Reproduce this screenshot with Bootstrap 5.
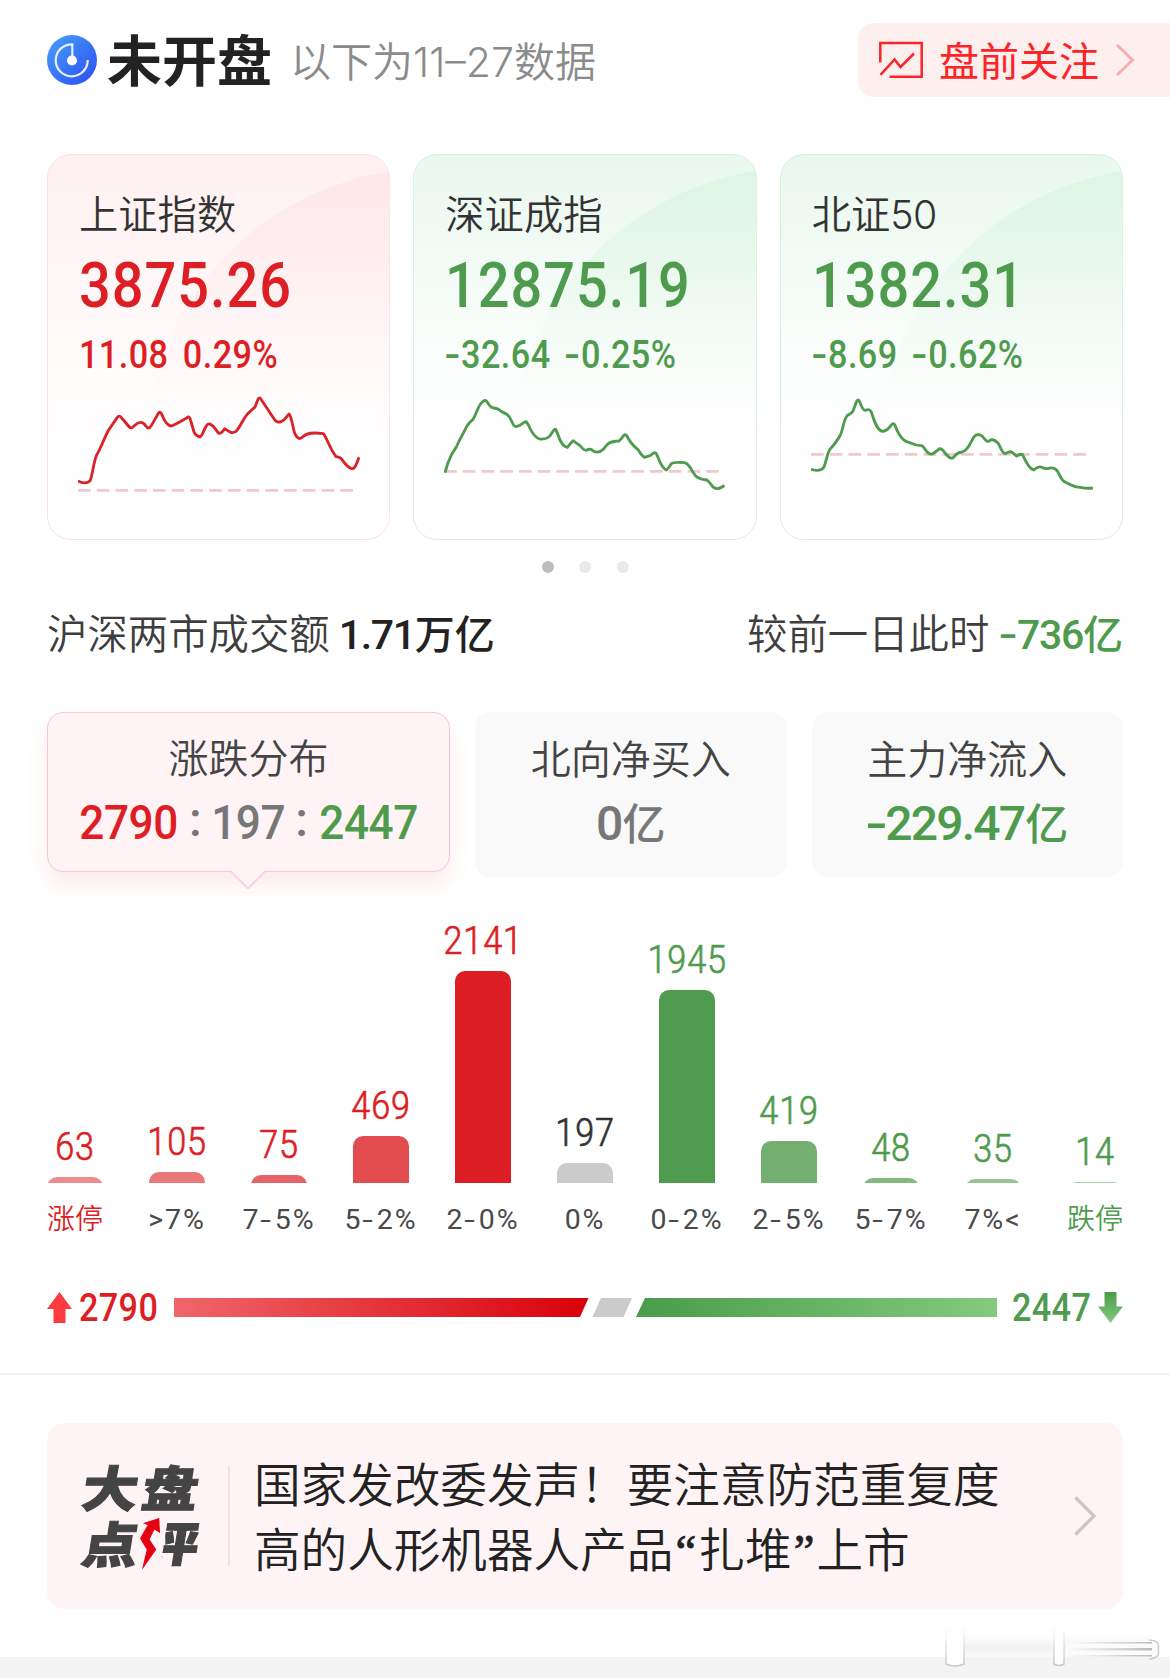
<!DOCTYPE html>
<html lang="zh-CN">
<head>
<meta charset="utf-8">
<meta name="viewport" content="width=device-width, initial-scale=1">
<title>大盘行情</title>
<link href="https://cdn.jsdelivr.net/npm/bootstrap@5.3.0/dist/css/bootstrap.min.css" rel="stylesheet">
<style>
  :root { --up: #dd1f25; --down: #4f9b4e; --ink: #333; }
  body { font-family: "Noto Sans CJK SC", sans-serif; font-weight: 350; color: var(--ink); width: 1170px; background: #fff; overflow-x: hidden; line-height: 1; }
  svg { display: block; flex: none; }
  .page-area { height: 1657px; }
  .side { padding-left: 47px; padding-right: 47px; }
  .up { color: var(--up); }
  .down { color: var(--down); }
  .num { font-family: Roboto, "Noto Sans CJK SC", sans-serif; font-weight: 500; }
  .minus { display: inline-block; transform: scaleX(1.35); margin: 0 3px 0 1.500px; }

  .top-bar { height: 120px; padding-left: 47px; }
  .main-title { font-size: 55px; font-weight: 700; color: #222; margin: -6px 0 0 10px; line-height: 60px; }
  .date-note { font-family: Inter, "Noto Sans CJK SC", sans-serif; font-size: 41px; font-weight: 350; color: #8b8b8b; margin: 3px 0 0 18px; line-height: 60px; }
  .date-note .digits { letter-spacing: 0; font-weight: 300; }
  .focus-link { width: 312px; height: 74px; background: #feefef; border-radius: 16px 0 0 16px; padding-left: 21px; color: #fb2429; font-size: 40px; font-weight: 400; }
  .focus-link span { margin-top: -2px; }

  .index-cards { gap: 23px; margin-top: 34px; }
  .index-card { flex: 1 1 0; height: 386px; border: 1.500px solid; border-radius: 24px; padding: 30px 30px 0; position: relative; overflow: hidden; }
  .index-card > * { position: relative; }
  .index-card::before { content: ""; position: absolute; left: 96px; top: 13px; width: 580px; height: 580px; border-radius: 50%; }
  .card-up { border-color: #fde3e5; background: linear-gradient(#fff0f1, #fffafa 50%, #fff 80%); }
  .card-up::before { background: linear-gradient(#fde7e9, rgba(255,240,242,.5) 25%, rgba(255,255,255,0) 42%); }
  .card-down { border-color: #d9f1de; background: linear-gradient(#e9f8ee, #fafdfb 50%, #fff 80%); }
  .card-down::before { background: linear-gradient(#ddf6e3, rgba(235,249,239,.5) 25%, rgba(255,255,255,0) 42%); }
  .index-name { font-size: 39.3px; line-height: 54px; height: 54px; padding-left: 1px; }
  .index-name .digits { font-family: Inter, sans-serif; font-weight: 300; letter-spacing: -.5px; line-height: 1; }
  .index-price { font-size: 63px; line-height: 60px; margin-top: 17px; padding-left: 1px; letter-spacing: 1.1px; white-space: nowrap; transform: scaleX(.888); transform-origin: 0 0; }
  .index-change { font-size: 38px; line-height: 40px; margin-top: 19px; padding-left: 1px; display: flex; gap: 16px; white-space: nowrap; letter-spacing: .5px; transform: scaleX(.9); transform-origin: 0 0; }
  .index-line { margin-top: 10px; }

  .pager { gap: 25.500px; height: 12px; margin-top: 21px; }
  .pager span { width: 12px; height: 12px; border-radius: 50%; background: #e9e9e9; }
  .pager .now { background: #bdbdbd; }

  .turnover { height: 60px; margin-top: 31px; font-size: 40.4px; color: #3e3e3e; }
  .turnover .num { font-size: 41px; letter-spacing: -1.3px; }
  .turnover .total-sum { color: #222; margin-left: 9px; }
  .turnover .num i { font-style: normal; font-size: 40px; letter-spacing: 0; }

  .stat-tabs { gap: 25px; margin-top: 48px; height: 165px; }
  .stat-tab { border-radius: 16px; background: #f9f9f9; height: 165px; text-align: center; padding-top: 18px; width: 311.5px; color: #444; position: relative; }
  .stat-tab.chosen { width: 403px; height: 160px; background: #fff3f5; border: 1.500px solid #f8c9cc; padding-top: 16px; box-shadow: 0 14px 22px rgba(235,60,70,.10); }
  .caption-line { font-size: 40px; line-height: 54px; }
  .figure-line { font-size: 48px; line-height: 60px; margin-top: 10px; letter-spacing: -1.8px; color: #777; white-space: nowrap; }
  .figure-line.down { color: var(--down); }
  .figure-line i { font-style: normal; font-size: 43px; letter-spacing: 0; margin-left: 1px; }
  .figure-line .part { letter-spacing: -.5px; transform: scaleX(.92); }
  .figure-line .sep { width: 26px; letter-spacing: 0; margin-top: -3px; }
  .tab-pointer { position: absolute; left: 181px; bottom: -19px; }

  .bars-row { width: 1122px; margin-left: 24px; margin-top: 31px; }
  .bar-col { width: 102px; height: 332px; display: flex; flex-direction: column; justify-content: flex-end; align-items: center; white-space: nowrap; }
  .bar-value { font-family: Roboto, sans-serif; font-weight: 300; font-size: 38px; line-height: 38px; letter-spacing: 1px; margin-bottom: 11px; -webkit-text-stroke: .7px currentColor; transform: scaleX(.9); }
  .bar-clip { width: 56px; overflow: hidden; flex: none; }
  .bar-clip::before { content: ""; display: block; height: 240px; border-radius: 10px; background: var(--fill); }
  .bar-label { font-family: Roboto, "Noto Sans CJK SC", sans-serif; font-weight: 400; font-size: 28.5px; line-height: 40px; margin-top: 17px; color: #4a4a4a; letter-spacing: 1.9px; height: 40px; }
  .bar-label.up, .bar-label.down { font-size: 28px; font-weight: 350; letter-spacing: 0; }
  .bar-label.up { color: var(--up); }
  .bar-label.down { color: var(--down); }

  .split-row { height: 40px; margin-top: 47px; }
  .split-row .num { font-size: 38px; letter-spacing: .4px; line-height: 40px; transform: scaleX(.9); transform-origin: 0 50%; margin-right: -9px; padding-top: 2px; }
  .split-row .side-sum { gap: 7px; }

  .rule-line { height: 2px; background: #f2f2f2; margin-top: 46px; }
  .comment-box { margin: 48px 47px 0; height: 186px; border-radius: 18px; background: #fff4f5; position: relative; padding-left: 36px; padding-right: 27px; }
  .comment-logo { width: 116px; font-weight: 900; color: #444; font-size: 56px; line-height: 56px; margin-top: -4px; }
  .logo-line { display: flex; justify-content: space-between; height: 56px; transform: skewX(-9deg) scaleY(.87); -webkit-text-stroke: 1.2px currentColor; }
  .logo-line .half-cut { clip-path: inset(0 -4px 0 38%); }
  .logo-bolt { position: absolute; left: 93px; top: 94px; }
  .comment-sep { width: 2px; height: 100px; background: #fbdfe2; margin-left: 29px; }
  .comment-text { margin: -5px 0 0 24px; font-size: 46.6px; line-height: 65px; color: #222; white-space: nowrap; flex: 1; }
  .comment-text q { quotes: none; font-family: "Liberation Serif", serif; display: inline-block; width: 25px; text-align: center; line-height: 1; -webkit-text-stroke: .8px currentColor; }
  .foot-strip { height: 21px; background: #f4f4f4; position: relative; }
  .foot-mark { position: absolute; right: 4px; bottom: 8px; }
</style>
</head>
<body>
<div class="page-area">
  <header class="top-bar d-flex align-items-center">
    <svg width="50" height="50" viewBox="0 0 50 50">
      <defs><linearGradient id="blue" x1="0" y1="0" x2="1" y2="1"><stop offset="0" stop-color="#49a0fb"/><stop offset="1" stop-color="#2a4df0"/></linearGradient></defs>
      <circle cx="25" cy="25" r="25" fill="url(#blue)"/>
      <path d="M25.300 25V9.300A16 16 0 1 0 40.700 25" fill="none" stroke="#e4efff" stroke-width="2.200"/>
      <circle cx="25" cy="25.500" r="5" fill="#fff"/>
    </svg>
    <h1 class="main-title">未开盘</h1>
    <span class="date-note">以下为<span class="digits">11–27</span>数据</span>
    <a class="focus-link ms-auto d-flex align-items-center text-decoration-none">
      <svg width="44" height="38" viewBox="0 0 44 38" fill="none" stroke="#fb2429" stroke-width="2.500"><path d="M1.300 21.500V2H42.700V35.800H10.500M1.500 33.800 15.600 18.500 21.500 26 35 12.500"/></svg>
      <span class="ms-3">盘前关注</span>
      <svg class="ms-3" width="20" height="34" viewBox="0 0 20 34" fill="none" stroke="#fbaaaf" stroke-width="2.800"><path d="M2 2 17.500 17 2 32"/></svg>
    </a>
  </header>

  <section class="index-cards side d-flex">
    <article class="index-card card-up">
      <div class="index-name">上证指数</div>
      <div class="index-price num up">3875.26</div>
      <div class="index-change num up"><span>11.08</span><span>0.29%</span></div>
      <svg class="index-line" width="282" height="120" viewBox="144 735 846 360" fill="none">
        <path d="M144 1051H972" stroke="#efc9cc" stroke-width="8" stroke-dasharray="38 18.200"/>
        <path d="M144 1023C155 1029 172 1032 181 1021C188 1002 191 965 200 945C214 922 222 895 236 870L262 832Q268 824 275 834L298 861Q304 868 313 857C326 844 339 844 347 857Q356 871 364 857L385 820Q390 812 396 824C405 849 413 857 425 858L442 850L470 834Q478 826 481 838L492 876Q497 888 510 891C520 887 525 852 536 852C551 851 556 872 567 880Q575 880 584 866C596 872 602 884 618 874C631 861 638 838 654 820Q672 804 675 801L684 778Q689 769 694 779L734 839Q740 850 755 844C765 841 768 830 777 822C786 832 788 864 795 882Q805 901 815 893C829 878 848 876 880 881C889 889 896 920 918 950Q932 952 936 959C945 972 954 983 965 986Q973 988 979 973L987 952" stroke="#d92328" stroke-width="8.500" stroke-linejoin="round"/>
      </svg>
    </article>
    <article class="index-card card-down">
      <div class="index-name">深证成指</div>
      <div class="index-price num down">12875.19</div>
      <div class="index-change num down"><span><span class="minus">-</span>32.64</span><span><span class="minus">-</span>0.25%</span></div>
      <svg class="index-line" width="282" height="120" viewBox="133 735 846 360" fill="none">
        <path d="M133 994H958" stroke="#efc9cc" stroke-width="8" stroke-dasharray="38 18.200"/>
        <path d="M136 998Q144 966 156 943Q171 923 181 898L203 856Q211 845 220 838C230 825 233 799 248 786Q257 776 264 788C273 805 279 804 293 806Q305 816 322 823C337 834 337 859 349 860C362 860 369 847 379 845C390 854 395 890 420 897C437 898 447 896 454 883Q464 866 468 868C477 881 480 918 503 922Q514 908 520 902L541 917Q555 933 560 931Q572 924 581 933Q596 942 611 928C622 912 628 904 658 903Q666 896 673 885Q680 882 685 894C694 911 704 920 716 930Q728 950 735 952L753 946Q763 935 769 940C778 954 782 981 800 990Q807 984 815 971Q822 965 855 968C872 973 878 999 890 1010Q903 1019 922 1020Q932 1029 941 1042Q958 1052 974 1036" stroke="#4f9b4e" stroke-width="8.500" stroke-linejoin="round"/>
      </svg>
    </article>
    <article class="index-card card-down">
      <div class="index-name">北证<span class="digits">50</span></div>
      <div class="index-price num down">1382.31</div>
      <div class="index-change num down"><span><span class="minus">-</span>8.69</span><span><span class="minus">-</span>0.62%</span></div>
      <svg class="index-line" width="282" height="120" viewBox="122 735 846 360" fill="none">
        <path d="M122 943H948" stroke="#efc9cc" stroke-width="8" stroke-dasharray="38 18.200"/>
        <path d="M122 988Q149 996 160 983C168 967 168 947 178 929Q201 903 210 885C219 866 220 838 231 826Q247 819 250 808L259 784Q264 775 268 785Q278 813 286 811Q297 805 303 816C311 840 320 874 338 874Q351 872 362 856Q370 846 374 856C386 890 402 906 419 908Q437 917 454 917C466 921 466 944 486 942Q500 933 508 926Q516 926 524 939Q544 964 552 949Q562 937 574 936C593 933 602 904 611 890Q624 877 638 891Q650 909 658 902Q668 894 682 908C691 919 693 938 704 941Q718 934 722 935L739 948Q755 938 758 947C770 974 779 987 790 990Q804 978 812 981Q824 988 835 985Q852 980 862 994C873 1016 875 1024 890 1029Q914 1042 930 1042Q949 1046 968 1044" stroke="#4f9b4e" stroke-width="8.500" stroke-linejoin="round"/>
      </svg>
    </article>
  </section>

  <div class="pager d-flex justify-content-center"><span class="now"></span><span></span><span></span></div>

  <section class="turnover side d-flex justify-content-between align-items-center">
    <div>沪深两市成交额<span class="num total-sum">1.71<i>万亿</i></span></div>
    <div>较前一日此时<span class="num down ms-2"><span class="minus ms-1">-</span>736<i>亿</i></span></div>
  </section>

  <section class="stat-tabs side d-flex">
    <div class="stat-tab chosen">
      <div class="caption-line">涨跌分布</div>
      <div class="figure-line num d-flex justify-content-center"><span class="part up">2790</span><span class="sep">:</span><span class="part">197</span><span class="sep">:</span><span class="part down">2447</span></div>
      <svg class="tab-pointer" width="38" height="21" viewBox="0 0 38 21"><path d="M1 0V2L19 19.500 37 2V0Z" fill="#fff3f5"/><path d="M1 1.500 19 19.500 37 1.500" fill="none" stroke="#f8c9cc" stroke-width="1.500"/></svg>
    </div>
    <div class="stat-tab">
      <div class="caption-line">北向净买入</div>
      <div class="figure-line num">0<i>亿</i></div>
    </div>
    <div class="stat-tab">
      <div class="caption-line">主力净流入</div>
      <div class="figure-line num down"><span class="minus">-</span>229.47<i>亿</i></div>
    </div>
  </section>

  <section class="bars-row d-flex">
    <div class="bar-col"><span class="bar-value up">63</span><div class="bar-clip" style="height:6.500px;--fill:#ed8c8f"></div><span class="bar-label up">涨停</span></div>
    <div class="bar-col"><span class="bar-value up">105</span><div class="bar-clip" style="height:11px;--fill:#ea787b"></div><span class="bar-label">&gt;7%</span></div>
    <div class="bar-col"><span class="bar-value up">75</span><div class="bar-clip" style="height:8px;--fill:#e66467"></div><span class="bar-label">7<span class="minus">-</span>5%</span></div>
    <div class="bar-col"><span class="bar-value up">469</span><div class="bar-clip" style="height:47px;--fill:#e34c4f"></div><span class="bar-label">5<span class="minus">-</span>2%</span></div>
    <div class="bar-col"><span class="bar-value up">2141</span><div class="bar-clip" style="height:212px;--fill:#dd1f25"></div><span class="bar-label">2<span class="minus">-</span>0%</span></div>
    <div class="bar-col"><span class="bar-value">197</span><div class="bar-clip" style="height:20px;--fill:#cbcbcb"></div><span class="bar-label">0%</span></div>
    <div class="bar-col"><span class="bar-value down">1945</span><div class="bar-clip" style="height:193px;--fill:#4f9b4e"></div><span class="bar-label">0<span class="minus">-</span>2%</span></div>
    <div class="bar-col"><span class="bar-value down">419</span><div class="bar-clip" style="height:42px;--fill:#72af71"></div><span class="bar-label">2<span class="minus">-</span>5%</span></div>
    <div class="bar-col"><span class="bar-value down">48</span><div class="bar-clip" style="height:5px;--fill:#84b983"></div><span class="bar-label">5<span class="minus">-</span>7%</span></div>
    <div class="bar-col"><span class="bar-value down">35</span><div class="bar-clip" style="height:4px;--fill:#95c394"></div><span class="bar-label">7%&lt;</span></div>
    <div class="bar-col"><span class="bar-value down">14</span><div class="bar-clip" style="height:1.500px;--fill:#a7cda7"></div><span class="bar-label down">跌停</span></div>
  </section>

  <section class="split-row side d-flex align-items-center justify-content-between">
    <div class="side-sum d-flex align-items-center">
      <svg width="25" height="31" viewBox="0 0 25 31"><path d="M12.500 0 25 17H18.500V31H6.500V17H0Z" fill="#fb3b3e"/></svg>
      <span class="num up">2790</span>
    </div>
    <svg width="823" height="19" viewBox="0 0 823 19">
      <defs>
        <linearGradient id="redbar"><stop offset="0" stop-color="#f0666b"/><stop offset="1" stop-color="#d80109"/></linearGradient>
        <linearGradient id="greenbar"><stop offset="0" stop-color="#4a9c48"/><stop offset="1" stop-color="#82ca80"/></linearGradient>
        <linearGradient id="greenarrow" x1="0" y1="0" x2="0" y2="1"><stop offset="0" stop-color="#4a9c48"/><stop offset="1" stop-color="#82ca80"/></linearGradient>
      </defs>
      <path d="M0 0H414.500L406 19H0Z" fill="url(#redbar)"/>
      <path d="M427 0H458L449.500 19H418.500Z" fill="#cbcbcb"/>
      <path d="M471 0H823V19H462Z" fill="url(#greenbar)"/>
    </svg>
    <div class="side-sum d-flex align-items-center">
      <span class="num down">2447</span>
      <svg width="25" height="31" viewBox="0 0 25 31"><path d="M12.500 31 0 14.500H6.500V0H18.500V14.500H25Z" fill="url(#greenarrow)"/></svg>
    </div>
  </section>

  <div class="rule-line"></div>

  <section class="comment-box d-flex align-items-center">
    <div class="comment-logo"><div class="logo-line"><span>大</span><span>盘</span></div><div class="logo-line"><span>点</span><span class="half-cut">评</span></div></div>
    <svg class="logo-bolt" width="23" height="54" viewBox="0 0 24 60" preserveAspectRatio="none"><path d="M20 1 3 7 8 9 0 24 7 36 2 59 17 36 10 25 15 14 21 18Z" fill="#e50012"/></svg>
    <div class="comment-sep"></div>
    <p class="comment-text">国家发改委发声！要注意防范重复度<br>高的人形机器人产品<q>“</q>扎堆<q>”</q>上市</p>
    <svg width="22" height="40" viewBox="0 0 22 40" fill="none" stroke="#c9c5c6" stroke-width="3.200"><path d="M1.500 1.500 20 20 1.500 38.500"/></svg>
  </section>
</div>
<footer class="foot-strip">
  <svg class="foot-mark" width="230" height="46" viewBox="0 0 230 46">
    <defs>
      <linearGradient id="fade" x1="0" y1="0" x2="0" y2="1"><stop offset="0" stop-color="#fff" stop-opacity="0"/><stop offset=".5" stop-color="#f1f1f1"/><stop offset="1" stop-color="#f4f4f4" stop-opacity="0"/></linearGradient>
      <linearGradient id="edge" x1="0" y1="0" x2="0" y2="1"><stop offset="0" stop-color="#ccc" stop-opacity="0"/><stop offset="1" stop-color="#c8c8c8"/></linearGradient>
      <linearGradient id="streak"><stop offset="0" stop-color="#c8c8c8" stop-opacity="0"/><stop offset="1" stop-color="#b8b8b8"/></linearGradient>
    </defs>
    <rect x="10" y="4" width="206" height="38" fill="url(#fade)"/>
    <path d="M10 2V40Q19 44 28 40V2Z" fill="#fefefe" stroke="url(#edge)" stroke-width="1.500"/>
    <path d="M118 2V40Q123 43 128 40V2Z" fill="#fefefe" stroke="url(#edge)" stroke-width="1.500"/>
    <path d="M130 17H216Q224 25 216 34L130 31Z" fill="#fbfbfb"/>
    <path d="M132 18H216V19.500H132ZM132 24H216V26.500H132ZM132 31H216V32.500H132Z" fill="url(#streak)"/>
    <path d="M213 16Q225 17 222 25Q225 34 213 35" fill="none" stroke="#c9c9c9" stroke-width="1.500"/>
  </svg>
</footer>
<script src="https://cdn.jsdelivr.net/npm/bootstrap@5.3.0/dist/js/bootstrap.bundle.min.js"></script>
</body>
</html>
